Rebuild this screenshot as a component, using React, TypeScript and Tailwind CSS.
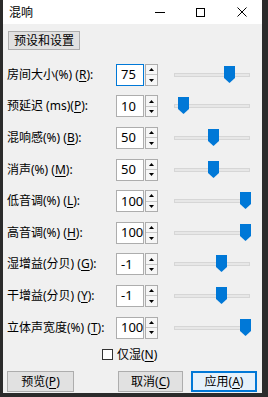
import React from 'react';

const rows = [
  { label: '房间大小(%) ', key: 'R', value: '75', pos: 0.75, focused: true },
  { label: '预延迟 (ms)', key: 'P', value: '10', pos: 0.06 },
  { label: '混响感(%) ', key: 'B', value: '50', pos: 0.51 },
  { label: '消声(%) ', key: 'M', value: '50', pos: 0.52 },
  { label: '低音调(%) ', key: 'L', value: '100', pos: 1 },
  { label: '高音调(%) ', key: 'H', value: '100', pos: 1 },
  { label: '湿增益(分贝) ', key: 'G', value: '-1', pos: 0.63 },
  { label: '干增益(分贝) ', key: 'Y', value: '-1', pos: 0.63 },
  { label: '立体声宽度(%) ', key: 'T', value: '100', pos: 1 },
];

const Spinner: React.FC = () => (
  <div className="ml-[1px] flex h-[22px] w-[13px] flex-col border border-[#adadad] bg-[#f6f6f6]">
    <div className="flex flex-1 items-center justify-center border-b border-[#c8c8c8]">
      <svg width="5" height="3" viewBox="0 0 5 3"><path d="M2.5 0 L5 3 H0 Z" fill="#000" /></svg>
    </div>
    <div className="flex flex-1 items-center justify-center">
      <svg width="5" height="3" viewBox="0 0 5 3"><path d="M0 0 H5 L2.5 3 Z" fill="#000" /></svg>
    </div>
  </div>
);

const Slider: React.FC<{ pos: number }> = ({ pos }) => (
  <div className="relative ml-[16px] h-[22px] w-[76px]">
    <div className="absolute left-0 right-0 top-[9px] h-[4px] border border-[#d6d6d6] bg-[#e7e7e7]" />
    <svg
      className="absolute top-[2px]"
      style={{ left: `${Math.round(pos * 66)}px` }}
      width="11"
      height="17"
      viewBox="0 0 11 17"
    >
      <path d="M0 0 H11 V12 L5.5 17 L0 12 Z" fill="#0078d7" />
    </svg>
  </div>
);

const App: React.FC = () => {
  return (
    <div
      className="h-[397px] w-[268px] bg-[#2b2b2b] pb-[4px] pl-[3px] pr-[6px] text-black"
      style={{ fontFamily: '"Noto Sans", "Noto Sans CJK SC", sans-serif' }}
    >
      <div className="flex h-full flex-col bg-[#f0f0f0]">
        {/* Title bar */}
        <div className="flex h-[24px] items-center bg-white">
          <span className="pl-[6px] text-[12px] leading-none" style={{ fontFamily: '"Noto Sans CJK SC", sans-serif' }}>混响</span>
          <div className="ml-auto flex h-full">
            <div className="flex w-[41px] items-center justify-center">
              <div className="h-[1px] w-[10px] bg-black" />
            </div>
            <div className="flex w-[41px] items-center justify-center">
              <div className="h-[9px] w-[9px] border border-black" />
            </div>
            <div className="flex w-[41px] items-center justify-center">
              <svg width="10" height="10" viewBox="0 0 10 10">
                <path d="M0.5 0.5 L9.5 9.5 M9.5 0.5 L0.5 9.5" stroke="#000" strokeWidth="1" />
              </svg>
            </div>
          </div>
        </div>

        <div className="pl-[5px] pt-[7px]">
          <button className="flex h-[19px] w-[72px] items-center justify-center border border-[#adadad] bg-[#e1e1e1] text-[12px] leading-none">
            预设和设置
          </button>
        </div>

        {/* Parameter rows */}
        <div className="mt-[9px] flex flex-col">
          {rows.map(r => (
            <div key={r.key} className="flex h-[31.6px] items-center pl-[4px]">
              <div className="w-[109px] whitespace-nowrap text-[12px] leading-none">
                {r.label}(<u className="underline-offset-2">{r.key}</u>):
              </div>
              <div
                className={`flex h-[22px] w-[28px] items-center border bg-white pl-[4px] text-[13px] leading-none ${
                  r.focused ? 'border-[#0078d7]' : 'border-[#adadad]'
                }`}
              >
                {r.value}
              </div>
              <Spinner />
              <Slider pos={r.pos} />
            </div>
          ))}
        </div>

        {/* Checkbox */}
        <div className="mt-[5px] flex h-[13px] items-center pl-[99px]">
          <div className="h-[11px] w-[11px] border border-[#333] bg-white" />
          <span className="ml-[4px] text-[12px] leading-none">
            仅湿(<u className="underline-offset-2">N</u>)
          </span>
        </div>

        {/* Bottom buttons */}
        <div className="mt-[10px] flex pl-[4px] pr-[5px]">
          <button className="flex h-[21px] w-[67px] items-center justify-center border border-[#adadad] bg-[#e1e1e1] text-[12px] leading-none">
            预览(<u className="underline-offset-2">P</u>)
          </button>
          <button className="ml-auto flex h-[21px] w-[65px] items-center justify-center border border-[#adadad] bg-[#e1e1e1] text-[12px] leading-none">
            取消(<u className="underline-offset-2">C</u>)
          </button>
          <button className="ml-[8px] flex h-[21px] w-[66px] items-center justify-center border-2 border-[#0078d7] bg-[#e5f1fb] text-[12px] leading-none">
            应用(<u className="underline-offset-2">A</u>)
          </button>
        </div>
      </div>
    </div>
  );
};

export default App;
